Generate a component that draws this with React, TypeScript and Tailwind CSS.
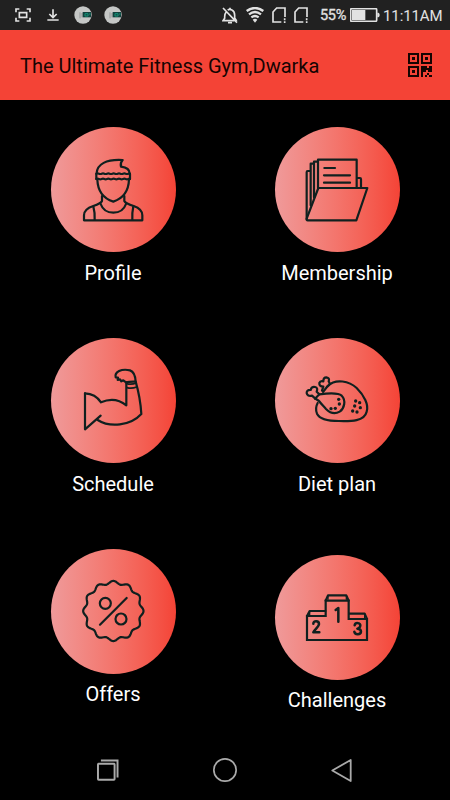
import type { ReactNode } from "react";

type MenuItem = {
  label: string;
  icon: ReactNode;
  className?: string;
};

/** Shared frame for the line icons drawn inside the menu circles */
function LineIcon({ children }: { children: ReactNode }) {
  return (
    <svg
      viewBox="0 0 258 270"
      className="h-[90px] w-[86px]"
      fill="none"
      stroke="#10201f"
      strokeWidth={6.6}
      strokeLinecap="round"
      strokeLinejoin="round"
      aria-hidden
    >
      {children}
    </svg>
  );
}

function ProfileIcon() {
  return (
    <LineIcon>
      <path d="M80 84C82 58 108 42 158 45Q150 53 153 65C170 67 179 72 179 86" />
      <path d="M79 86q4-2 8 0t8 0t8 0t8 0t8 0t8 0t8 0t8 0t8 0t8 0t8 0t8 0t5 0" />
      <path d="M79 102q4-2 8 0t8 0t8 0t8 0t8 0t8 0t8 0t8 0t8 0t8 0t8 0t8 0t5 0" />
      <path d="M79 87v15M180 87v15" />
      <path d="M82 103C83 137 98 160 130 170C161 160 176 137 177 103" />
      <path d="M96 153V168Q93 175 70 183C48 190 42 199 42 211V226H217V211C217 198 209 189 191 183Q166 175 163 168V153" />
      <path d="M92 177C98 194 112 203 130 203S162 194 168 177" />
      <path d="M70 184Q75 202 74 225M190 184Q186 202 187 225" />
    </LineIcon>
  );
}

function MembershipIcon() {
  return (
    <LineIcon>
      <path d="M72 128V44H188V128" />
      <path d="M69 50H60V157M59 56H50V181M48 78H41Q38 78 38 82V222" />
      <path d="M190 99H198Q201 99 201 103V127" />
      <path d="M73 129H220L187 226H41Q37 226 38 221Z" />
      <path d="M91 69H123M90 91H168M90 113H168" />
    </LineIcon>
  );
}

function ScheduleIcon() {
  return (
    <LineIcon>
      <path d="M45 115V223L92 182" />
      <path d="M45 115Q76 116 93 142C120 130 148 134 169 151V82" />
      <path d="M83 195C119 218 181 213 214 177Q211 128 197 80" />
      <path d="M197 80C196 60 192 50 180 46C154 40 133 51 137 67L144 68L143 75L150 73L154 79L160 76L168 82Q181 79 197 80" />
      <path d="M170 86Q184 90 199 84M171 98Q185 102 200 96" strokeWidth={5} />
    </LineIcon>
  );
}

function DietIcon() {
  return (
    <LineIcon>
      <path d="M87 111L101 93C126 69 166 79 188 99C210 121 225 149 218 170C211 199 172 199 135 198C100 198 77 193 69 176C65 166 65 155 71 144" />
      <path d="M63 131L76 118C92 116 131 111 143 122C157 136 151 161 137 170C120 180 105 171 96 162C88 153 80 145 75 138L66 132" />
      <path d="M76 118L68 110Q73 98 63 96Q52 94 50 105Q38 104 38 114Q40 125 54 122L64 131" />
      <path d="M84 107L88 95Q75 94 76 84Q79 76 88 79Q88 67 97 67Q108 69 104 79Q111 88 101 94" />
      <g fill="#10201f" stroke="none">
        <circle cx="134" cy="133" r="5" />
        <circle cx="136" cy="147" r="5" />
        <circle cx="124" cy="160" r="5" />
        <circle cx="111" cy="161" r="5" />
        <circle cx="185" cy="138" r="5" />
        <circle cx="197" cy="143" r="5" />
        <circle cx="182" cy="153" r="5" />
        <circle cx="199" cy="158" r="5" />
        <circle cx="176" cy="168" r="5" />
        <circle cx="189" cy="171" r="5" />
      </g>
    </LineIcon>
  );
}

// wavy badge outline: 12 bumps around the centre
const badgePoints = Array.from({ length: 180 }, (_, i) => {
  const a = (i * Math.PI) / 90;
  const r = 86 + 4.5 * Math.cos(12 * a);
  return `${(130 + r * Math.sin(a)).toFixed(1)},${(135 - r * Math.cos(a)).toFixed(1)}`;
}).join(" ");

function OffersIcon() {
  return (
    <LineIcon>
      <polygon points={badgePoints} />
      <circle cx="106" cy="112" r="16.5" />
      <circle cx="153" cy="159" r="16.5" />
      <path d="M170 96L90 176" />
    </LineIcon>
  );
}

function ChallengesIcon() {
  return (
    <LineIcon>
      <path d="M39 204V132H95V86H164V141H219V204Z" strokeLinejoin="miter" />
      <path d="M95 86L102 70H157L164 86M39 132L47 117H94M165 125H212L219 141" />
      <path d="M102 71V82M157 71V82M47 118V128M212 126V137" strokeWidth={4} />
      <path d="M125 114L133 108V149" strokeWidth={7.5} />
      <path d="M58 155C58 145 75 145 75 156C75 164 62 172 58 181H76" strokeWidth={7.5} />
      <path d="M182 160C184 150 200 152 199 161Q198 169 190 170Q201 170 201 179C200 190 182 189 181 179" strokeWidth={7.5} />
    </LineIcon>
  );
}

const items: MenuItem[] = [
  { label: "Profile", icon: <ProfileIcon /> },
  { label: "Membership", icon: <MembershipIcon /> },
  { label: "Schedule", icon: <ScheduleIcon /> },
  { label: "Diet plan", icon: <DietIcon /> },
  { label: "Offers", icon: <OffersIcon /> },
  { label: "Challenges", icon: <ChallengesIcon />, className: "pt-1.5" },
];

function AppNotification() {
  return (
    <svg viewBox="0 0 54 54" className="size-[18px]" aria-hidden>
      <circle cx="27" cy="27" r="26" fill="#c5c7c6" />
      <path d="M18 19V37M24 21V34" stroke="#777b7b" strokeWidth="2" />
      <path d="M26 18H51V34H26Z" fill="#12433f" />
      <path d="M33 23H42V30H33ZM45 24H50" fill="none" stroke="#159378" strokeWidth="3" />
    </svg>
  );
}

function SimIcon() {
  return (
    <svg viewBox="0 0 42 48" className="h-4 w-3.5" fill="none" stroke="#e2e2e2" strokeWidth="5" aria-hidden>
      <path d="M28 45H3V15L14 3H39V30M38 34V40M38 43V48" />
    </svg>
  );
}

function StatusBar() {
  return (
    <div className="flex h-[30px] shrink-0 items-center bg-[#212121] pl-[15px] pr-2 text-[#e2e2e2]">
      <svg viewBox="0 0 48 42" className="h-3.5 w-4" fill="none" stroke="currentColor" strokeWidth="5" aria-hidden>
        <path d="M3 13V3H13M35 3H45V13M45 29V39H35M13 39H3V29M13 14H35V28H13Z" />
      </svg>
      <svg viewBox="0 0 36 36" className="ml-4 size-3" fill="none" stroke="currentColor" strokeWidth="5" aria-hidden>
        <path d="M18 1V25M7 15L18 26L29 15M1 33H35" />
      </svg>
      <div className="ml-[15px] flex gap-3">
        <AppNotification />
        <AppNotification />
      </div>
      <div className="ml-auto flex items-center">
        <svg viewBox="0 0 48 51" className="mr-2 h-[17px] w-4" fill="none" stroke="currentColor" strokeWidth="5" aria-hidden>
          <path d="M3 3L45 47M13 14Q8 20 8 29V34L3 41H37M17 9Q23 5 30 9Q38 13 38 25V33L44 42" />
          <path d="M18 47H30M24 2V7" />
        </svg>
        <svg viewBox="0 0 54 48" className="mr-2 h-4 w-[18px]" fill="none" stroke="currentColor" strokeWidth="7" aria-hidden>
          <path d="M2 12Q27-6 52 12M9 22Q27 8 45 22M16 31Q27 23 38 31" />
          <path d="M20 38Q27 33 34 38L27 47Z" fill="currentColor" stroke="none" />
        </svg>
        <SimIcon />
        <span className="w-2" />
        <SimIcon />
        <span className="ml-3 w-[27px] whitespace-nowrap pt-0.5 text-[14.5px] tracking-[-0.3px] [-webkit-text-stroke:0.3px]">55%</span>
        <svg viewBox="0 0 90 42" className="ml-[3px] h-3.5 w-[30px]" aria-hidden>
          <rect x="2" y="2" width="78" height="38" rx="3" fill="none" stroke="currentColor" strokeWidth="5" />
          <rect x="6" y="6" width="40" height="30" fill="currentColor" />
          <path d="M82 14H85Q89 15 89 21T85 28H82Z" fill="currentColor" />
        </svg>
        <span className="ml-[3px] w-[59px] whitespace-nowrap pt-0.5 text-[15px] tracking-[-0.1px]">11:11AM</span>
      </div>
    </div>
  );
}

function QrIcon() {
  return (
    <svg viewBox="0 0 72 72" className="size-6 text-[#160402]" shapeRendering="crispEdges" aria-hidden>
      <g fill="none" stroke="currentColor" strokeWidth="6">
        <rect x="3" y="3" width="27" height="27" />
        <rect x="42" y="3" width="27" height="27" />
        <rect x="3" y="42" width="27" height="27" />
      </g>
      <path
        fill="currentColor"
        d="M12 12h9v9h-9zM51 12h9v9h-9zM12 51h9v9h-9zM39 39h18v6h6v-6h9v18h-12v-6h-6v6h-9v15h-6zM51 66h6v6h-6zM63 66h9v6h-9zM57 60h6v6h-6z"
      />
    </svg>
  );
}

function NavBar() {
  return (
    <nav className="flex h-[60px] shrink-0 items-center justify-between pl-[97px] pr-[98px] text-[#aaa]">
      <svg viewBox="0 0 66 66" className="h-[22px] w-[21.5px]" fill="none" stroke="currentColor" strokeWidth="6" aria-hidden>
        <rect x="3" y="14" width="51" height="49" rx="2" />
        <path d="M12 4H63V56" />
      </svg>
      <svg viewBox="0 0 72 72" className="size-6" fill="none" stroke="currentColor" strokeWidth="5" aria-hidden>
        <circle cx="36" cy="36" r="33.5" />
      </svg>
      <svg viewBox="0 0 62 70" className="h-[23px] w-[21px]" fill="none" stroke="currentColor" strokeWidth="5.5" strokeLinejoin="round" aria-hidden>
        <path d="M59 3V67L3 35Z" />
      </svg>
    </nav>
  );
}

export default function App() {
  return (
    <div className="flex h-[800px] w-[450px] flex-col overflow-hidden bg-black font-['Roboto',sans-serif]">
      <StatusBar />
      <header className="flex h-[70px] shrink-0 items-center justify-between bg-[#f44336] pl-5 pr-[18px]">
        <h1 className="pt-0.5 text-[20px] leading-6 text-[#160402]">The Ultimate Fitness Gym,Dwarka</h1>
        <QrIcon />
      </header>
      <main className="grid min-h-0 flex-1 auto-rows-[210.6px] grid-cols-2 content-start px-px pt-[27.4px]">
        {items.map((item) => (
          <button
            key={item.label}
            type="button"
            className={`flex flex-col items-center ${item.className ?? ""}`}
          >
            <span className="flex size-[125px] shrink-0 items-center justify-center rounded-full bg-linear-to-r from-[#ef9a9a] to-[#f44336]">
              {item.icon}
            </span>
            <span className="mt-[8.8px] text-[20px] leading-6 text-white">{item.label}</span>
          </button>
        ))}
      </main>
      <NavBar />
    </div>
  );
}
